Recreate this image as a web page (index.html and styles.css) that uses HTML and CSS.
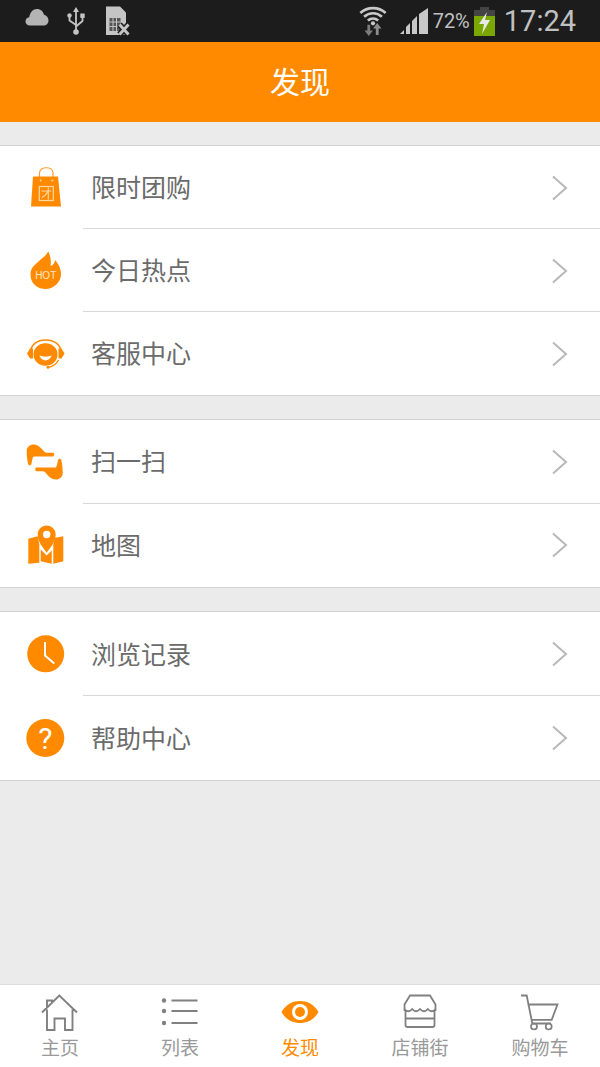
FILE: index.html
```html
<!DOCTYPE html>
<html>
<head>
    <title>发现</title>
    <link rel="stylesheet" href="styles.css">
</head>
<body>
    <div class="app">
        <div class="statusbar">
            <div class="status-left">
                <svg class="st-cloud" width="24" height="18" viewBox="0 0 24 18"><path d="M5 17.500C2 17.500.5 15.500.5 13.500c0-2.200 1.500-4 3.700-4.200C5 4.500 8 1 12 1c3.500 0 6.200 2.300 7 5.800 2.600.5 4.500 3 4.500 5.700 0 2.800-2 5-4.700 5z" fill="#b4b4b4"/></svg>
                <svg class="st-usb" width="18" height="28" viewBox="0 0 18 28"><path d="M9 3v21M2.500 9v4.500L9 18M15.500 9v5L9 19.500" fill="none" stroke="#c4c4c4" stroke-width="1.800"/><path d="M9 0l3 5H6z" fill="#c4c4c4"/><circle cx="9" cy="25" r="2.800" fill="#c4c4c4"/><circle cx="2.500" cy="8.500" r="2.200" fill="#c4c4c4"/><rect x="13.300" y="6.500" width="4.400" height="4.400" fill="#c4c4c4"/></svg>
                <svg class="st-sim" width="26" height="30" viewBox="0 0 26 30"><path d="M1 .5h14l6 6V29H1z" fill="#c4c4c4"/><rect x="4.500" y="12" width="11" height="13" fill="#555"/><path d="M8 12v13M11.500 12v13M4.500 16h11M4.500 20.500h11" stroke="#c4c4c4" stroke-width="1"/><path d="M14.500 18.500l9 10M23.500 18.500l-9 10" stroke="#1c1c1c" stroke-width="6"/><path d="M14.500 18.500l9 10M23.500 18.500l-9 10" stroke="#c4c4c4" stroke-width="3"/></svg>
            </div>
            <div class="status-right">
                <svg class="st-wifi" width="30" height="30" viewBox="0 0 30 32"><path d="M1.500 7.500C9 .6 21 .6 28.500 7.500M5.500 11.500c5.500-5 13.500-5 19 0M9.500 15.500c3.200-2.800 7.800-2.800 11 0" fill="none" stroke="#c8c8c8" stroke-width="2.800"/><circle cx="15" cy="18.500" r="2.200" fill="#c8c8c8"/><path d="M9 20h3v6h3l-4.500 6L6 26h3z" fill="#7c7c7c"/><path d="M19.500 18l4.500 6h-3v7h-3v-7h-3z" fill="#8c8c8c"/></svg>
                <svg class="st-signal" width="28" height="26" viewBox="0 0 28 26"><path d="M0 26l4-4v4zM6 26v-7l4-4v11zM12 26V13l5-5v18zM19 26V6l9-6v26z" fill="#c8c8c8"/></svg>
                <span class="st-pct">72%</span>
                <svg class="st-batt" width="21" height="29" viewBox="0 0 21 29"><rect x="6" y="0" width="9" height="3" fill="#444"/><rect x="0" y="3" width="21" height="6" fill="#444"/><rect x="0" y="9" width="21" height="20" fill="#7aa800"/><path d="M13 5L5 17h5l-2 10 8-14h-5z" fill="#e8e8e8"/></svg>
                <span class="st-time">17:24</span>
            </div>
        </div>

        <div class="header">发现</div>

        <div class="content">
            <div class="group group-a">
                <div class="row">
                    <svg class="icon" width="44" height="44" viewBox="0 0 44 44"><path d="M16.500 11V7c0-7 13.500-7 13.500 0v4" fill="none" stroke="#ff9d33" stroke-width="1.200"/><path d="M10 10.500h25l3 30H8z" fill="#ff8a00"/><circle cx="17.700" cy="14.500" r="1" fill="#ffd9a8"/><circle cx="29.300" cy="14.500" r="1" fill="#ffd9a8"/><rect x="16.300" y="20.500" width="14" height="14" fill="none" stroke="#ffd9a8" stroke-width="1.200"/><path d="M18.300 25h10M25.300 21.500v12M24.800 25.500c-1.500 3-3.500 5-6 6" fill="none" stroke="#ffd9a8" stroke-width="1.100"/></svg>
                    <span class="label">限时团购</span>
                    <svg class="arrow" width="18" height="26" viewBox="0 0 18 26"><path d="M3 1.500L16 13 3 24.500" fill="none" stroke="#b8b8b8" stroke-width="2"/></svg>
                </div>
                <div class="row">
                    <svg class="icon" width="44" height="44" viewBox="0 0 44 44"><path d="M25.300 2.500C22 8 19 9 15 13c-5 4-7.500 7-7.500 13 0 8 6.500 14 15.200 14C31 40 38 33 38 25c0-6-3-11-6-14.100 0 3.100-2 5.100-4.500 6.100 1-6-.5-11-2.200-14.500z" fill="#ff8a00"/><text x="22.700" y="30" class="hot">HOT</text></svg>
                    <span class="label">今日热点</span>
                    <svg class="arrow" width="18" height="26" viewBox="0 0 18 26"><path d="M3 1.500L16 13 3 24.500" fill="none" stroke="#b8b8b8" stroke-width="2"/></svg>
                </div>
                <div class="row">
                    <svg class="icon" width="44" height="44" viewBox="0 0 44 44"><path d="M7.700 20C8 12.500 14 8 22.700 8S37.500 12.500 38 20" fill="none" stroke="#ff8a00" stroke-width="1.500"/><path d="M7 16.500L4 21.500l3 5h3v-10zM38.500 16.500l3 5-3 5h-3v-10z" fill="#ff8a00"/><ellipse cx="22.500" cy="22.500" rx="12" ry="11.200" fill="#ff8a00"/><path d="M16.300 23.500c3 6.500 9.400 6.500 12.400 0-4 1.500-8.400 1.500-12.400 0z" fill="#fff"/><path d="M35.500 28c-2 4-5 6.500-10 7.300" fill="none" stroke="#ff8a00" stroke-width="1.300"/><circle cx="25" cy="35.300" r="1.500" fill="#ff8a00"/></svg>
                    <span class="label">客服中心</span>
                    <svg class="arrow" width="18" height="26" viewBox="0 0 18 26"><path d="M3 1.500L16 13 3 24.500" fill="none" stroke="#b8b8b8" stroke-width="2"/></svg>
                </div>
            </div>

            <div class="group group-b">
                <div class="row">
                    <svg class="icon" width="44" height="44" viewBox="0 0 44 44"><path d="M3.700 11C3.700 7 7 4.500 10.300 4.500c3.700 0 6.200 2 8.400 4.300 1.800 2.200 2.800 4 5.300 4h6c1.500 0 1.500 3.700 0 3.700H11.500c-2 0-2 2.500-3 7-.5 2.500-3 2.500-3.500 0-1-4.500-1.300-8.500-1.300-12.500z" fill="#ff8a00"/><path d="M3.700 11C3.700 7 7 4.500 10.300 4.500c3.700 0 6.200 2 8.400 4.300 1.800 2.200 2.800 4 5.300 4h6c1.500 0 1.500 3.700 0 3.700H11.500c-2 0-2 2.500-3 7-.5 2.500-3 2.500-3.500 0-1-4.500-1.300-8.500-1.300-12.500z" fill="#ff8a00" transform="rotate(180 21.700 22)"/></svg>
                    <span class="label">扫一扫</span>
                    <svg class="arrow" width="18" height="26" viewBox="0 0 18 26"><path d="M3 1.500L16 13 3 24.500" fill="none" stroke="#b8b8b8" stroke-width="2"/></svg>
                </div>
                <div class="row">
                    <svg class="icon" width="44" height="44" viewBox="0 0 44 44"><path d="M5.300 15.800l9.400-2.600 1.600 8.300v18.300l-11 1zM17.700 26.500l6 6 5-5v13.300l-11-2.600zM32 14.800l8.300-1.600v25l-10 2.600V21.500z" fill="#ff8a00"/><path d="M23.700 29.800c-3-5-9-10-9-18.300 0-5 4-9 9-9s9 4 9 9c0 8.300-6 13.300-9 18.300z" fill="#ff8a00"/><circle cx="23.700" cy="11.500" r="3.700" fill="#fff"/></svg>
                    <span class="label">地图</span>
                    <svg class="arrow" width="18" height="26" viewBox="0 0 18 26"><path d="M3 1.500L16 13 3 24.500" fill="none" stroke="#b8b8b8" stroke-width="2"/></svg>
                </div>
            </div>

            <div class="group group-c">
                <div class="row">
                    <svg class="icon" width="44" height="44" viewBox="0 0 44 44"><circle cx="22.700" cy="21.800" r="18.500" fill="#ff8a00"/><path d="M22 10v13.500l9.300 8" fill="none" stroke="#fff" stroke-width="2"/></svg>
                    <span class="label">浏览记录</span>
                    <svg class="arrow" width="18" height="26" viewBox="0 0 18 26"><path d="M3 1.500L16 13 3 24.500" fill="none" stroke="#b8b8b8" stroke-width="2"/></svg>
                </div>
                <div class="row">
                    <svg class="icon" width="44" height="44" viewBox="0 0 44 44"><circle cx="22.300" cy="22" r="19" fill="#ff8a00"/><text x="22.300" y="33" class="help">?</text></svg>
                    <span class="label">帮助中心</span>
                    <svg class="arrow" width="18" height="26" viewBox="0 0 18 26"><path d="M3 1.500L16 13 3 24.500" fill="none" stroke="#b8b8b8" stroke-width="2"/></svg>
                </div>
            </div>
        </div>

        <div class="tabbar">
            <div class="tab">
                <svg width="38" height="38" viewBox="0 0 38 38"><path d="M1 18.500L18.300 1.500l17.700 17M6 14V6.500h5v3M6 15.500V36h7.500V24.500h10.500V36h7.500V15.500" fill="none" stroke="#808080" stroke-width="1.900"/></svg>
                <span>主页</span>
            </div>
            <div class="tab">
                <svg width="38" height="38" viewBox="0 0 38 38"><path d="M10.500 6.500h26M10.500 17h26M10.500 29h26" stroke="#808080" stroke-width="1.800"/><circle cx="3" cy="6.500" r="2.200" fill="#808080"/><circle cx="3" cy="17" r="2.200" fill="#808080"/><circle cx="3" cy="29" r="2.200" fill="#808080"/></svg>
                <span>列表</span>
            </div>
            <div class="tab active">
                <svg width="38" height="38" viewBox="0 0 38 38"><path d="M.5 18C5 10 12 7 19 7s14 3 18.500 11C33 26 26 29 19 29S5 26 .5 18z" fill="#ff8a00"/><circle cx="19" cy="18" r="8" fill="#fff"/><circle cx="19" cy="18" r="5" fill="#ff8a00"/></svg>
                <span>发现</span>
            </div>
            <div class="tab">
                <svg width="36" height="38" viewBox="0 0 36 38"><path d="M2.500 17V10.500L8 1.500h20l5.500 9V17M2.500 15c2.500 3 5 3 7.700 0 2.600 3 5 3 7.800 0 2.800 3 5.200 3 7.800 0 2.700 3 5.200 3 7.700 0M3.500 17v14c0 1.200 1 2 2 2h25c1 0 2-.8 2-2V17M3.500 24.500h29" fill="none" stroke="#808080" stroke-width="1.800"/></svg>
                <span>店铺街</span>
            </div>
            <div class="tab">
                <svg width="38" height="38" viewBox="0 0 38 38"><path d="M0 1.500h5.700l5.600 28H30M6.500 10.500h30l-5.800 15.300H10.500" fill="none" stroke="#808080" stroke-width="1.800"/><circle cx="13" cy="32.500" r="3" fill="none" stroke="#808080" stroke-width="1.700"/><circle cx="27.700" cy="32.500" r="3" fill="none" stroke="#808080" stroke-width="1.700"/></svg>
                <span>购物车</span>
            </div>
        </div>
    </div>
</body>
</html>
```
FILE: styles.css
```css
* {
    box-sizing: border-box;
}
html, body {
    margin: 0;
    padding: 0;
}
body {
    font-family: Roboto, "Noto Sans CJK SC", sans-serif;
    background: #ebebeb;
}
.app {
    width: 600px;
    height: 1067px;
    display: flex;
    flex-direction: column;
    overflow: hidden;
}
.statusbar {
    height: 42px;
    background: #1c1c1c;
    display: flex;
    justify-content: space-between;
    align-items: center;
    padding: 0 24px 0 25px;
    color: #c0c0c0;
}
.status-left, .status-right {
    display: flex;
    align-items: center;
}
.st-cloud {
    margin-bottom: 8px;
}
.st-usb {
    margin-left: 18px;
}
.st-sim {
    margin-left: 20px;
}
.st-signal {
    margin-left: 12px;
}
.st-pct {
    font-size: 20px;
    margin-left: 5px;
}
.st-batt {
    margin-left: 4px;
}
.st-time {
    font-size: 29px;
    margin-left: 9px;
}
.header {
    height: 80px;
    background: #ff8a00;
    color: #fff;
    font-family: "Noto Sans CJK SC", sans-serif;
    font-size: 30px;
    padding-bottom: 5px;
    display: flex;
    align-items: center;
    justify-content: center;
}
.content {
    flex: 1;
    padding-top: 23px;
    display: flex;
    flex-direction: column;
    gap: 23px;
}
.group {
    background: #fff;
    border-top: 1px solid #d2d2d2;
    border-bottom: 1px solid #d2d2d2;
}
.row {
    height: 83px;
    display: flex;
    align-items: center;
    position: relative;
    padding-right: 32px;
}
.group-b .row {
    height: 83.5px;
}
.group-c .row {
    height: 84px;
}
.row + .row::before {
    content: "";
    position: absolute;
    top: -1px;
    left: 83px;
    right: 0;
    height: 1px;
    background: #d8d8d8;
}
.icon {
    margin-left: 23px;
    flex: none;
}
.label {
    margin-left: 24px;
    padding-bottom: 3px;
    flex: 1;
    font-family: "Noto Sans CJK SC", sans-serif;
    font-size: 25px;
    color: #6b6b6b;
}
.hot {
    font-family: "Liberation Sans", sans-serif;
    font-size: 10px;
    fill: #ffe6c8;
    text-anchor: middle;
}
.help {
    font-family: Roboto, sans-serif;
    font-size: 30px;
    fill: #fff;
    text-anchor: middle;
}
.tabbar {
    height: 83px;
    background: #fff;
    border-top: 1px solid #dcdcdc;
    display: flex;
}
.tab {
    flex: 1;
    display: flex;
    flex-direction: column;
    align-items: center;
    font-family: "Noto Sans CJK SC", sans-serif;
    font-size: 19px;
    color: #999;
}
.tab svg {
    margin-top: 9px;
}
.tab span {
    line-height: 26px;
    margin-top: 2px;
}
.tab.active {
    color: #ff8a00;
}
```
